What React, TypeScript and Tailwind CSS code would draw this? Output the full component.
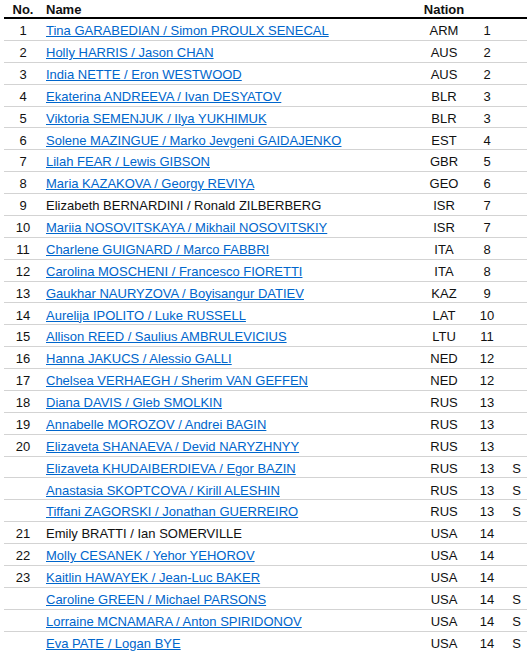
const rows: [string, string, string, string, string, boolean][] = [
  ["1", "Tina GARABEDIAN / Simon PROULX SENECAL", "ARM", "1", "", true],
  ["2", "Holly HARRIS / Jason CHAN", "AUS", "2", "", true],
  ["3", "India NETTE / Eron WESTWOOD", "AUS", "2", "", true],
  ["4", "Ekaterina ANDREEVA / Ivan DESYATOV", "BLR", "3", "", true],
  ["5", "Viktoria SEMENJUK / Ilya YUKHIMUK", "BLR", "3", "", true],
  ["6", "Solene MAZINGUE / Marko Jevgeni GAIDAJENKO", "EST", "4", "", true],
  ["7", "Lilah FEAR / Lewis GIBSON", "GBR", "5", "", true],
  ["8", "Maria KAZAKOVA / Georgy REVIYA", "GEO", "6", "", true],
  ["9", "Elizabeth BERNARDINI / Ronald ZILBERBERG", "ISR", "7", "", false],
  ["10", "Mariia NOSOVITSKAYA / Mikhail NOSOVITSKIY", "ISR", "7", "", true],
  ["11", "Charlene GUIGNARD / Marco FABBRI", "ITA", "8", "", true],
  ["12", "Carolina MOSCHENI / Francesco FIORETTI", "ITA", "8", "", true],
  ["13", "Gaukhar NAURYZOVA / Boyisangur DATIEV", "KAZ", "9", "", true],
  ["14", "Aurelija IPOLITO / Luke RUSSELL", "LAT", "10", "", true],
  ["15", "Allison REED / Saulius AMBRULEVICIUS", "LTU", "11", "", true],
  ["16", "Hanna JAKUCS / Alessio GALLI", "NED", "12", "", true],
  ["17", "Chelsea VERHAEGH / Sherim VAN GEFFEN", "NED", "12", "", true],
  ["18", "Diana DAVIS / Gleb SMOLKIN", "RUS", "13", "", true],
  ["19", "Annabelle MOROZOV / Andrei BAGIN", "RUS", "13", "", true],
  ["20", "Elizaveta SHANAEVA / Devid NARYZHNYY", "RUS", "13", "", true],
  ["", "Elizaveta KHUDAIBERDIEVA / Egor BAZIN", "RUS", "13", "S", true],
  ["", "Anastasia SKOPTCOVA / Kirill ALESHIN", "RUS", "13", "S", true],
  ["", "Tiffani ZAGORSKI / Jonathan GUERREIRO", "RUS", "13", "S", true],
  ["21", "Emily BRATTI / Ian SOMERVILLE", "USA", "14", "", false],
  ["22", "Molly CESANEK / Yehor YEHOROV", "USA", "14", "", true],
  ["23", "Kaitlin HAWAYEK / Jean-Luc BAKER", "USA", "14", "", true],
  ["", "Caroline GREEN / Michael PARSONS", "USA", "14", "S", true],
  ["", "Lorraine MCNAMARA / Anton SPIRIDONOV", "USA", "14", "S", true],
  ["", "Eva PATE / Logan BYE", "USA", "14", "S", true],
];

export default function App() {
  return (
    <div className="w-[531px] h-[660px] bg-white px-[4px] text-[13px] text-[#111] overflow-hidden" style={{ fontFamily: '"Liberation Sans", Arial, sans-serif' }}>
      {/* header */}
      <div className="flex h-[19px] items-center pt-[2px] border-b-2 border-black font-bold">
        <div className="w-[38px] text-center">No.</div>
        <div className="flex-1 pl-[4px]">Name</div>
        <div className="w-[48px] text-center">Nation</div>
        <div className="w-[38px]"></div>
        <div className="w-[21px]"></div>
      </div>

      {rows.map(([no, name, nation, rank, sub, link], i) => (
        <div
          key={i}
          className={`flex h-[21.88px] items-center pt-[3px] ${i < rows.length - 1 ? "border-b border-[#d3d3d3]" : ""}`}
        >
          <div className="w-[38px] text-center">{no}</div>
          <div className="flex-1 pl-[4px] whitespace-nowrap">
            {link ? (
              <a href="#" className="text-[#0066cc] underline">
                {name}
              </a>
            ) : (
              name
            )}
          </div>
          <div className="w-[48px] text-center">{nation}</div>
          <div className="w-[38px] text-center">{rank}</div>
          <div className="w-[21px] text-center">{sub}</div>
        </div>
      ))}
    </div>
  );
}
